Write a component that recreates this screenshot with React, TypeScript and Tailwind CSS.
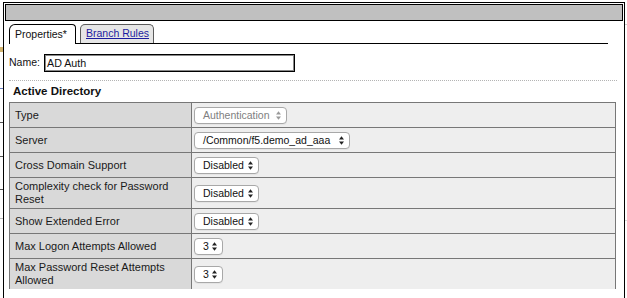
import React from "react";

const FONT = { fontFamily: '"Liberation Sans", Arial, sans-serif' };

function Arrows({ gray }: { gray?: boolean }) {
  return (
    <svg width="5" height="9" viewBox="0 0 5 9" className={gray ? "text-[#9a9a9a]" : "text-[#222]"}>
      <path d="M0 3.6 L2.5 0.2 L5 3.6Z M0 5.4 L5 5.4 L2.5 8.8Z" fill="currentColor" />
    </svg>
  );
}

function Sel({ text, cls, gray }: { text: string; cls: string; gray?: boolean }) {
  return (
    <div
      className={
        "flex items-center justify-between h-[17px] rounded-[4px] border border-[#a8a8a8] bg-white pl-[8px] pr-[5px] text-[10.5px] leading-none shadow-[0_1px_0_rgba(0,0,0,0.04)] " +
        cls
      }
    >
      <span className={gray ? "text-[#808080] whitespace-nowrap" : "text-[#111] whitespace-nowrap"}>{text}</span>
      <Arrows gray={gray} />
    </div>
  );
}

function Row({
  label,
  tall,
  last,
  children,
}: {
  label: string;
  tall?: boolean;
  last?: boolean;
  children: React.ReactNode;
}) {
  return (
    <div className={"flex border-b border-[#777] " + (last ? "h-[36px] pb-[5px]" : tall ? "h-[31px]" : "h-[25px]")}>
      <div className="w-[182px] shrink-0 border-r border-[#777] bg-[#d9d9d9] pl-[5px] pr-[4px] flex items-center text-[11px] leading-[13px] text-[#1a1a1a]">
        <span>{label}</span>
      </div>
      <div className="flex-1 border-r border-[#777] bg-[#eeeeee] pl-[2px] flex items-center">{children}</div>
    </div>
  );
}

export default function App() {
  return (
    <div className="flex w-[627px] h-[298px] overflow-hidden bg-white" style={FONT}>
      {/* background page sliver, left */}
      <div className="w-[3px] shrink-0 flex flex-col">
        <div className="h-[47px]" />
        <div className="h-[5px] bg-[#d2b36e]" />
        <div className="h-[36px]" />
        <div className="h-[1px] bg-[#6b7fc0]" />
        <div className="h-[33px]" />
        <div className="h-[1px] bg-[#555]" />
        <div className="h-[33px]" />
        <div className="h-[1px] bg-[#555]" />
        <div className="h-[32px]" />
        <div className="h-[1px] bg-[#555]" />
        <div className="h-[28px]" />
        <div className="h-[1px] bg-[#bbb]" />
      </div>

      {/* dialog frame */}
      <div className="w-[622px] shrink-0 mt-[2px] border-l border-r border-t border-black flex flex-col">
        <div className="mx-[1px] mt-[1px] h-[17px] border border-black bg-[#c0c0c0]" />

        <div className="h-[268px] overflow-hidden flex flex-col">
          {/* tabs */}
          <div className="ml-[5px] w-[599px] h-[23px] shrink-0 flex items-end gap-[4px] border-b border-black">
            <div className="-mb-px h-[20px] w-[67px] border border-b-0 border-black bg-white rounded-tl-[6px] rounded-tr-[4px] flex items-center pl-[5px] text-[10.5px] text-[#111]">
              Properties*
            </div>
            <div className="h-[19px] w-[74px] border border-b-0 border-[#5a5a5a] bg-[#e6e6e6] rounded-t-[5px] flex items-center pl-[5px] text-[10.5px]">
              <span className="text-[#1c1ca0] underline underline-offset-[1px]">Branch Rules</span>
            </div>
          </div>

          {/* name */}
          <div className="ml-[5px] mt-[10px] flex items-center h-[18px] shrink-0">
            <span className="w-[35px] text-[10.5px] text-[#111]">Name:</span>
            <div className="w-[251px] h-[18px] border border-black shadow-[inset_0_0_0_1px_#888] bg-white pl-[2px] flex items-center text-[10.7px] text-[#111]">
              AD Auth
            </div>
          </div>

          <div className="ml-[5px] mt-[8px] w-[608px] shrink-0 border-t border-dotted border-[#b4b4b4]" />

          <div className="ml-[9px] mt-[4px] h-[13px] shrink-0 leading-[13px] text-[11.5px] font-bold text-[#111]">
            Active Directory
          </div>

          {/* table */}
          <div className="ml-[5px] mt-[4px] w-[607px] shrink-0 border-l border-t border-[#777]">
            <Row label="Type">
              <Sel text="Authentication" cls="w-[93px]" gray />
            </Row>
            <Row label="Server">
              <Sel text="/Common/f5.demo_ad_aaa" cls="w-[156px]" />
            </Row>
            <Row label="Cross Domain Support">
              <Sel text="Disabled" cls="w-[65px]" />
            </Row>
            <Row label="Complexity check for Password Reset" tall>
              <Sel text="Disabled" cls="w-[65px]" />
            </Row>
            <Row label="Show Extended Error">
              <Sel text="Disabled" cls="w-[65px]" />
            </Row>
            <Row label="Max Logon Attempts Allowed">
              <Sel text="3" cls="w-[29px]" />
            </Row>
            <Row label="Max Password Reset Attempts Allowed" last>
              <Sel text="3" cls="w-[29px]" />
            </Row>
          </div>
        </div>
      </div>

      {/* background page sliver, right */}
      <div className="w-[2px] shrink-0 flex flex-col">
        <div className="h-[24px]" />
        <div className="h-[1px] bg-[#cfcfcf]" />
        <div className="h-[195px]" />
        <div className="h-[1px] bg-[#dcdcdc]" />
      </div>
    </div>
  );
}
